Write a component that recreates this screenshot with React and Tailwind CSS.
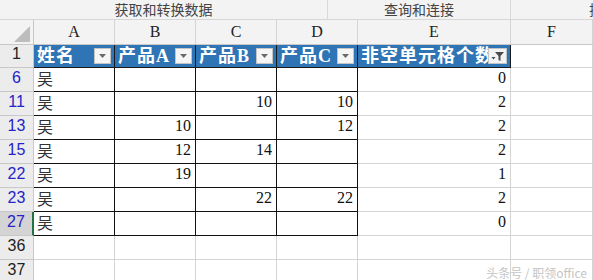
import React from "react";

const cols = ["w-[81px]", "w-[81px]", "w-[81px]", "w-[81px]", "w-[153px]", "w-[82px]"];

const rows = [
  { n: "6", a: "吴", b: "", c: "", d: "", e: "0" },
  { n: "11", a: "吴", b: "", c: "10", d: "10", e: "2" },
  { n: "13", a: "吴", b: "10", c: "", d: "12", e: "2" },
  { n: "15", a: "吴", b: "12", c: "14", d: "", e: "2" },
  { n: "22", a: "吴", b: "19", c: "", d: "", e: "1" },
  { n: "23", a: "吴", b: "", c: "22", d: "22", e: "2" },
  { n: "27", a: "吴", b: "", c: "", d: "", e: "0", active: true },
];

const serif = { fontFamily: '"Liberation Serif", "Noto Sans CJK SC", serif' };
const sans = { fontFamily: '"Liberation Sans", sans-serif' };

function DropButton() {
  return (
    <span className="absolute right-[3px] top-[3px] w-[17px] h-[16px] bg-[#f5f5f5] border border-[#c4c4c4] flex items-center justify-center">
      <svg width="7" height="4" viewBox="0 0 7 4">
        <path d="M0 0 H7 L3.5 4 Z" fill="#6a6a6a" />
      </svg>
    </span>
  );
}

function FilterButton() {
  return (
    <span className="absolute right-[3px] top-[3px] w-[19px] h-[16px] bg-[#f3f3f3] border border-[#c4c4c4] flex items-center justify-center">
      <svg width="14" height="11" viewBox="0 0 14 11">
        <path d="M4 1 H13 L9.5 5 V10 L7.5 9 V5 Z" fill="#4a4a4a" />
        <path d="M0.5 6 H4.5 L2.5 8.5 Z" fill="#4a4a4a" />
      </svg>
    </span>
  );
}

function HeaderCell({ w, text, filter }) {
  return (
    <div
      className={`${w} relative h-full bg-[#2f75b5] border-r border-b border-[#1a1a1a] flex items-end pl-[3px] pb-[1px] overflow-hidden`}
    >
      <span className="text-white font-bold text-[18px] leading-[20px] tracking-[1px] whitespace-nowrap" style={serif}>
        {text}
      </span>
      {filter ? <FilterButton /> : <DropButton />}
    </div>
  );
}

export default function App() {
  return (
    <div className="w-[593px] h-[280px] overflow-hidden bg-white flex flex-col" style={{ fontFamily: '"Noto Sans CJK SC", sans-serif' }}>
      {/* ribbon group labels */}
      <div className="h-[20px] shrink-0 flex bg-[#f3f3f3] border-b border-[#d6d6d6] text-[14px] text-[#444] leading-[19px]">
        <div className="w-[328px] border-r border-[#d9d9d9] text-center">获取和转换数据</div>
        <div className="w-[183px] border-r border-[#d9d9d9] text-center">查询和连接</div>
        <div className="flex-1 pl-[78px] overflow-hidden whitespace-nowrap">排</div>
      </div>

      {/* column letters */}
      <div className="h-[25px] shrink-0 flex bg-[#f3f3f3] border-b border-[#c8c8c8]" style={serif}>
        <div className="w-[34px] border-r border-[#c8c8c8] flex items-end justify-end pr-[3px] pb-[2px]">
          <svg width="16" height="16" viewBox="0 0 16 16">
            <path d="M16 0 V16 H0 Z" fill="#bdbdbd" />
          </svg>
        </div>
        {["A", "B", "C", "D", "E", "F"].map((l, i) => (
          <div key={l} className={`${cols[i]} border-r border-[#d4d4d4] flex items-center justify-center text-[16px] text-[#222]`}>
            {l}
          </div>
        ))}
      </div>

      {/* row 1: table header */}
      <div className="h-[23px] shrink-0 flex">
        <div className="w-[34px] bg-[#ececec] border-r border-b border-[#c8c8c8] flex items-end justify-center pb-[1px] text-[16px] text-[#222]" style={sans}>
          1
        </div>
        <HeaderCell w={cols[0]} text="姓名" />
        <HeaderCell w={cols[1]} text="产品A" />
        <HeaderCell w={cols[2]} text="产品B" />
        <HeaderCell w={cols[3]} text="产品C" />
        <HeaderCell w={cols[4]} text="非空单元格个数" filter />
        <div className={`${cols[5]} border-r border-b border-[#d4d4d4]`} />
      </div>

      {/* data rows */}
      {rows.map((r) => (
        <div key={r.n} className="h-[24px] shrink-0 flex text-[16px] text-[#111]">
          <div
            className={`w-[34px] border-b border-[#c8c8c8] flex items-end justify-center pb-[1px] text-[16px] text-[#2424c8] ${
              r.active ? "bg-[#d4d4d4] border-r-2 border-r-[#217346]" : "bg-[#ececec] border-r border-r-[#c8c8c8]"
            }`}
            style={sans}
          >
            {r.n}
          </div>
          <div className={`${cols[0]} border-r border-b border-[#111] flex items-end pl-[3px] pb-[1px] text-[#333]`}>
            {r.a}
          </div>
          {[r.b, r.c, r.d].map((v, i) => (
            <div key={i} className={`${cols[i + 1]} border-r border-b border-[#111] flex items-end justify-end pr-[4px] pb-[1px]`} style={serif}>
              {v}
            </div>
          ))}
          <div className={`${cols[4]} border-r border-b border-[#d4d4d4] flex items-end justify-end pr-[4px] pb-[1px]`} style={serif}>
            {r.e}
          </div>
          <div className={`${cols[5]} border-r border-b border-[#d4d4d4]`} />
        </div>
      ))}

      {/* empty rows */}
      {["36", "37"].map((n) => (
        <div key={n} className="h-[24px] shrink-0 flex">
          <div className="w-[34px] bg-[#ececec] border-r border-b border-[#c8c8c8] flex items-end justify-center pb-[1px] text-[16px] text-[#222]" style={sans}>
            {n}
          </div>
          {cols.map((w, i) => (
            <div key={i} className={`${w} border-r border-b border-[#d4d4d4]`} />
          ))}
        </div>
      ))}

      <div className="relative">
        <span className="absolute right-[6px] -top-[20px] text-[12px] text-[#c6c6c6] whitespace-nowrap">头条号 / 职领office</span>
      </div>
    </div>
  );
}
